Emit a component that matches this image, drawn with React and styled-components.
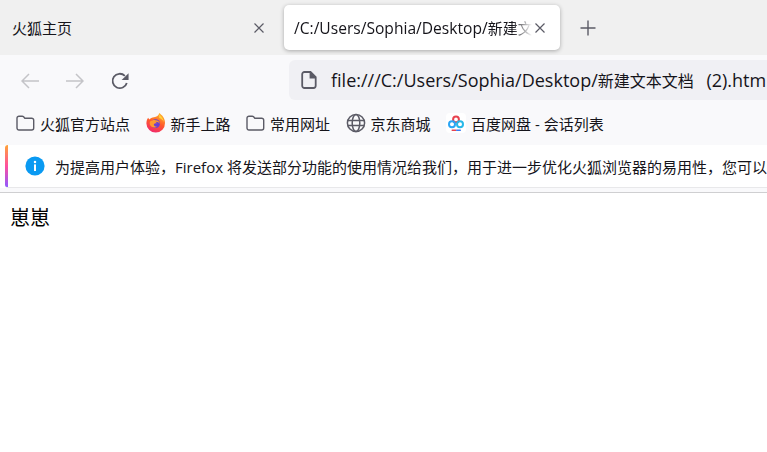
import React from "react";
import styled, {createGlobalStyle} from "styled-components";

const GlobalStyle = createGlobalStyle`
  html, body {
    margin: 0;
    padding: 0;
    height: 100%;
    background: #fff;
    overflow: hidden;
  }
  body {
    font-family: "Open Sans", "Noto Sans CJK SC", sans-serif;
    color: #15141a;
  }
`;

const Window = styled.div`
  width: 767px;
  height: 452px;
  overflow: hidden;
  display: flex;
  flex-direction: column;
`;

const TabStrip = styled.div`
  height: 55px;
  flex: none;
  background: #f0f0f0;
  display: flex;
  align-items: flex-start;
  padding-top: 5px;
  box-sizing: border-box;
`;

const Tab = styled.div`
  height: 45px;
  flex: none;
  box-sizing: border-box;
  width: ${(p) => p.$width}px;
  margin-right: ${(p) => p.$gap || 0}px;
  padding: ${(p) => (p.$active ? "0 14px 0 10px" : "0 19px 0 12px")};
  display: flex;
  align-items: center;
  justify-content: space-between;
  border-radius: 5px;
  background: ${(p) => (p.$active ? "#fff" : "transparent")};
  box-shadow: ${(p) => (p.$active ? "0 1px 4px rgba(0,0,0,0.3)" : "none")};
`;

const TabTitle = styled.span`
  font-size: 15.6px;
  white-space: nowrap;
  overflow: hidden;
  flex: 1;
  min-width: 0;
  ${(p) =>
    p.$fade &&
    `-webkit-mask-image: linear-gradient(to right, #000 218px, transparent 238px);
     mask-image: linear-gradient(to right, #000 218px, transparent 238px);`}
`;

const Cjk = styled.span`
  font-size: ${(p) => p.$size}px;
`;

const IconSlot = styled.span`
  display: flex;
  flex: none;
  color: #5b5b66;
`;

const NewTab = styled.span`
  display: flex;
  margin-top: 15px;
  color: #5b5b66;
`;

const NavBar = styled.div`
  height: 50px;
  flex: none;
  background: #f9f9fb;
  display: flex;
  align-items: center;
  padding-left: 21px;
  box-sizing: border-box;
`;

const NavButton = styled.span`
  display: flex;
  width: ${(p) => p.$width}px;
  flex: none;
  margin-top: 2px;
  color: ${(p) => (p.$disabled ? "#c4c4c8" : "#5b5b66")};
`;

const UrlBar = styled.div`
  flex: none;
  width: 520px;
  height: 40px;
  background: #f0f0f4;
  border-radius: 6px;
  display: flex;
  align-items: center;
  padding-left: 12px;
  box-sizing: border-box;
`;

const UrlText = styled.span`
  font-size: 18px;
  margin-left: 14px;
  white-space: nowrap;
  word-spacing: 8px;
`;

const BookmarkBar = styled.div`
  height: 40px;
  flex: none;
  background: #f9f9fb;
  display: flex;
  align-items: flex-start;
  padding: 6px 0 0 16px;
  box-sizing: border-box;
  gap: 15.5px;
`;

const Bookmark = styled.div`
  display: flex;
  align-items: center;
  gap: 5px;
  height: 24px;
  font-size: 15px;
  white-space: nowrap;
`;

const Notice = styled.div`
  height: 43px;
  flex: none;
  margin-left: 5px;
  background: #fff;
  border-bottom: 1px solid #e8e8ea;
  display: flex;
  align-items: center;
  box-sizing: border-box;
  white-space: nowrap;
  overflow: hidden;
  font-size: 15px;
  padding-left: 20px;
  border-radius: 3px 0 0 3px;
  background-image: linear-gradient(to bottom, #ffa436, #ff4f9e 50%, #9059ff);
  background-size: 3px 100%;
  background-repeat: no-repeat;

  svg {
    flex: none;
  }
`;

const NoticeText = styled.span`
  margin-left: 10px;
`;

const Rule = styled.div`
  flex: none;
  height: 5px;
  background: #f9f9fb;
  border-bottom: 1px solid #cfcfd1;
  box-sizing: border-box;
`;

const Page = styled.div`
  flex: 1;
  background: #fff;
  padding: 12px 10px;
  font-size: 20px;
  line-height: 26px;
  color: #000;
`;

const CloseIcon = () => (
  <svg width="12" height="12" viewBox="0 0 12 12" fill="none" stroke="currentColor" strokeWidth="1.2">
    <path d="M1.5 1.5l9 9M10.5 1.5l-9 9" />
  </svg>
);

const PlusIcon = () => (
  <svg width="16" height="16" viewBox="0 0 16 16" fill="none" stroke="currentColor" strokeWidth="1.4">
    <path d="M8 .5v15M.5 8h15" />
  </svg>
);

const ArrowIcon = ({flip}) => (
  <svg width="18" height="16" viewBox="0 0 18 16" fill="none" stroke="currentColor" strokeWidth="1.5">
    {flip ? <path d="M0 8h17M10 1l7 7-7 7" /> : <path d="M18 8H1M8 1L1 8l7 7" />}
  </svg>
);

const ReloadIcon = () => (
  <svg width="19" height="19" viewBox="0 0 20 20" fill="none">
    <path d="M16.6 11.5A7.6 7.6 0 1 1 14.6 4" stroke="currentColor" strokeWidth="1.9" />
    <path d="M18.5 1.2v7.3h-7.3z" fill="currentColor" />
  </svg>
);

const PageIcon = () => (
  <svg width="16" height="18" viewBox="0 0 16 18" fill="none" stroke="#5b5b66" strokeWidth="1.8">
    <path d="M9.5 1H3.5A2.2 2.2 0 0 0 1.2 3.2v11.6A2.2 2.2 0 0 0 3.5 17h9a2.2 2.2 0 0 0 2.2-2.2V6.2z" />
    <path d="M9.2 1v5.6h5.5" fill="#5b5b66" stroke="none" />
    <path d="M9.5 1.2v5.3h5" />
  </svg>
);

const FolderIcon = () => (
  <svg width="19" height="16" viewBox="0 0 19 16" fill="none" stroke="#5b5b66" strokeWidth="1.4">
    <path d="M1 3.2A2 2 0 0 1 3 1.2h3.2c.6 0 1 .2 1.4.6l1.2 1.4h6.9a2 2 0 0 1 2 2V13a2 2 0 0 1-2 2H3a2 2 0 0 1-2-2z" />
  </svg>
);

const FirefoxIcon = () => (
  <svg width="20" height="20" viewBox="0 0 20 20">
    <defs>
      <linearGradient id="fxBody" x1="0.7" y1="0" x2="0.3" y2="1">
        <stop offset="0" stopColor="#ffb52e" />
        <stop offset="0.5" stopColor="#ff5a2c" />
        <stop offset="1" stopColor="#f0266f" />
      </linearGradient>
    </defs>
    <path d="M13.2 0c2.6 2 5.8 4.6 5.8 10a9.3 9.3 0 0 1-18.6.4C.4 8 1.2 6 2.2 4.8l1 1.8C4.4 5 6 4.4 8 4.2c2.6-.3 4.8-1.6 5.2-4.2z" fill="url(#fxBody)" />
    <path d="M13 1.6c2.4 2 4.6 4.4 4.8 7.4-1-2.2-2.6-3.4-4.6-4z" fill="#ffd43a" />
    <circle cx="9.6" cy="10.6" r="4.4" fill="#6b3fd0" />
    <path d="M4 8.6c2-1.6 5-2 7.2-1 1.4.6 2.4 1.8 2.6 3.4-.8-1.6-2.6-2.4-4.4-2.2.8.4 1.2 1 1.4 1.6-1.2-.2-2.6.2-3 1.2 0 1.2 1.2 2.4 3.4 2.2-2.6 1.6-6.4.4-7.4-2.6-.2-.9 0-1.8.2-2.6z" fill="#ff9a2e" />
  </svg>
);

const GlobeIcon = () => (
  <svg width="20" height="20" viewBox="0 0 20 20" fill="none" stroke="#5b5b66" strokeWidth="1.5">
    <circle cx="10" cy="10" r="8.6" />
    <ellipse cx="10" cy="10" rx="3.8" ry="8.6" />
    <path d="M1.6 7.4h16.8M1.6 12.6h16.8" />
  </svg>
);

const BaiduIcon = () => (
  <svg width="20" height="20" viewBox="0 0 20 20" fill="none">
    <rect width="20" height="20" rx="4" fill="#fff" />
    <circle cx="10" cy="6.4" r="2.9" stroke="#e8424f" strokeWidth="2" />
    <circle cx="6" cy="11.2" r="3" stroke="#2aa5f5" strokeWidth="2" />
    <circle cx="14" cy="11.2" r="3" stroke="#27b8e8" strokeWidth="2" />
    <rect x="5.5" y="16.4" width="5" height="1.5" rx=".7" fill="#e8424f" />
    <rect x="10" y="16.4" width="5" height="1.5" rx=".7" fill="#3b7bf0" />
  </svg>
);

const InfoIcon = () => (
  <svg width="20" height="20" viewBox="0 0 20 20">
    <circle cx="10" cy="10" r="9.6" fill="#0a9af2" />
    <rect x="9" y="8.4" width="2" height="6.6" fill="#fff" />
    <circle cx="10" cy="5.9" r="1.25" fill="#fff" />
  </svg>
);

const bookmarks = [
  {icon: <FolderIcon />, label: "火狐官方站点"},
  {icon: <FirefoxIcon />, label: "新手上路"},
  {icon: <FolderIcon />, label: "常用网址"},
  {icon: <GlobeIcon />, label: "京东商城"},
  {icon: <BaiduIcon />, label: "百度网盘 - 会话列表"},
];

const App = () => (
  <Window>
    <GlobalStyle />
    <TabStrip>
      <Tab $width={284}>
        <TabTitle><Cjk $size={15}>火狐主页</Cjk></TabTitle>
        <IconSlot><CloseIcon /></IconSlot>
      </Tab>
      <Tab $active $width={276} $gap={20}>
        <TabTitle $fade>/C:/Users/Sophia/Desktop/<Cjk $size={15}>新建文本文档</Cjk> (2).html</TabTitle>
        <IconSlot><CloseIcon /></IconSlot>
      </Tab>
      <NewTab><PlusIcon /></NewTab>
    </TabStrip>
    <NavBar>
      <NavButton $disabled $width={45}><ArrowIcon /></NavButton>
      <NavButton $disabled $width={45}><ArrowIcon flip /></NavButton>
      <NavButton $width={178}><ReloadIcon /></NavButton>
      <UrlBar>
        <PageIcon />
        <UrlText>file:///C:/Users/Sophia/Desktop/<Cjk $size={16}>新建文本文档</Cjk> (2).html</UrlText>
      </UrlBar>
    </NavBar>
    <BookmarkBar>
      {bookmarks.map((b) => (
        <Bookmark key={b.label}>
          {b.icon}
          <span>{b.label}</span>
        </Bookmark>
      ))}
    </BookmarkBar>
    <Notice>
      <InfoIcon />
      <NoticeText>为提高用户体验，Firefox 将发送部分功能的使用情况给我们，用于进一步优化火狐浏览器的易用性，您可以在设置中关闭。</NoticeText>
    </Notice>
    <Rule />
    <Page>崽崽</Page>
  </Window>
);

export default App;
